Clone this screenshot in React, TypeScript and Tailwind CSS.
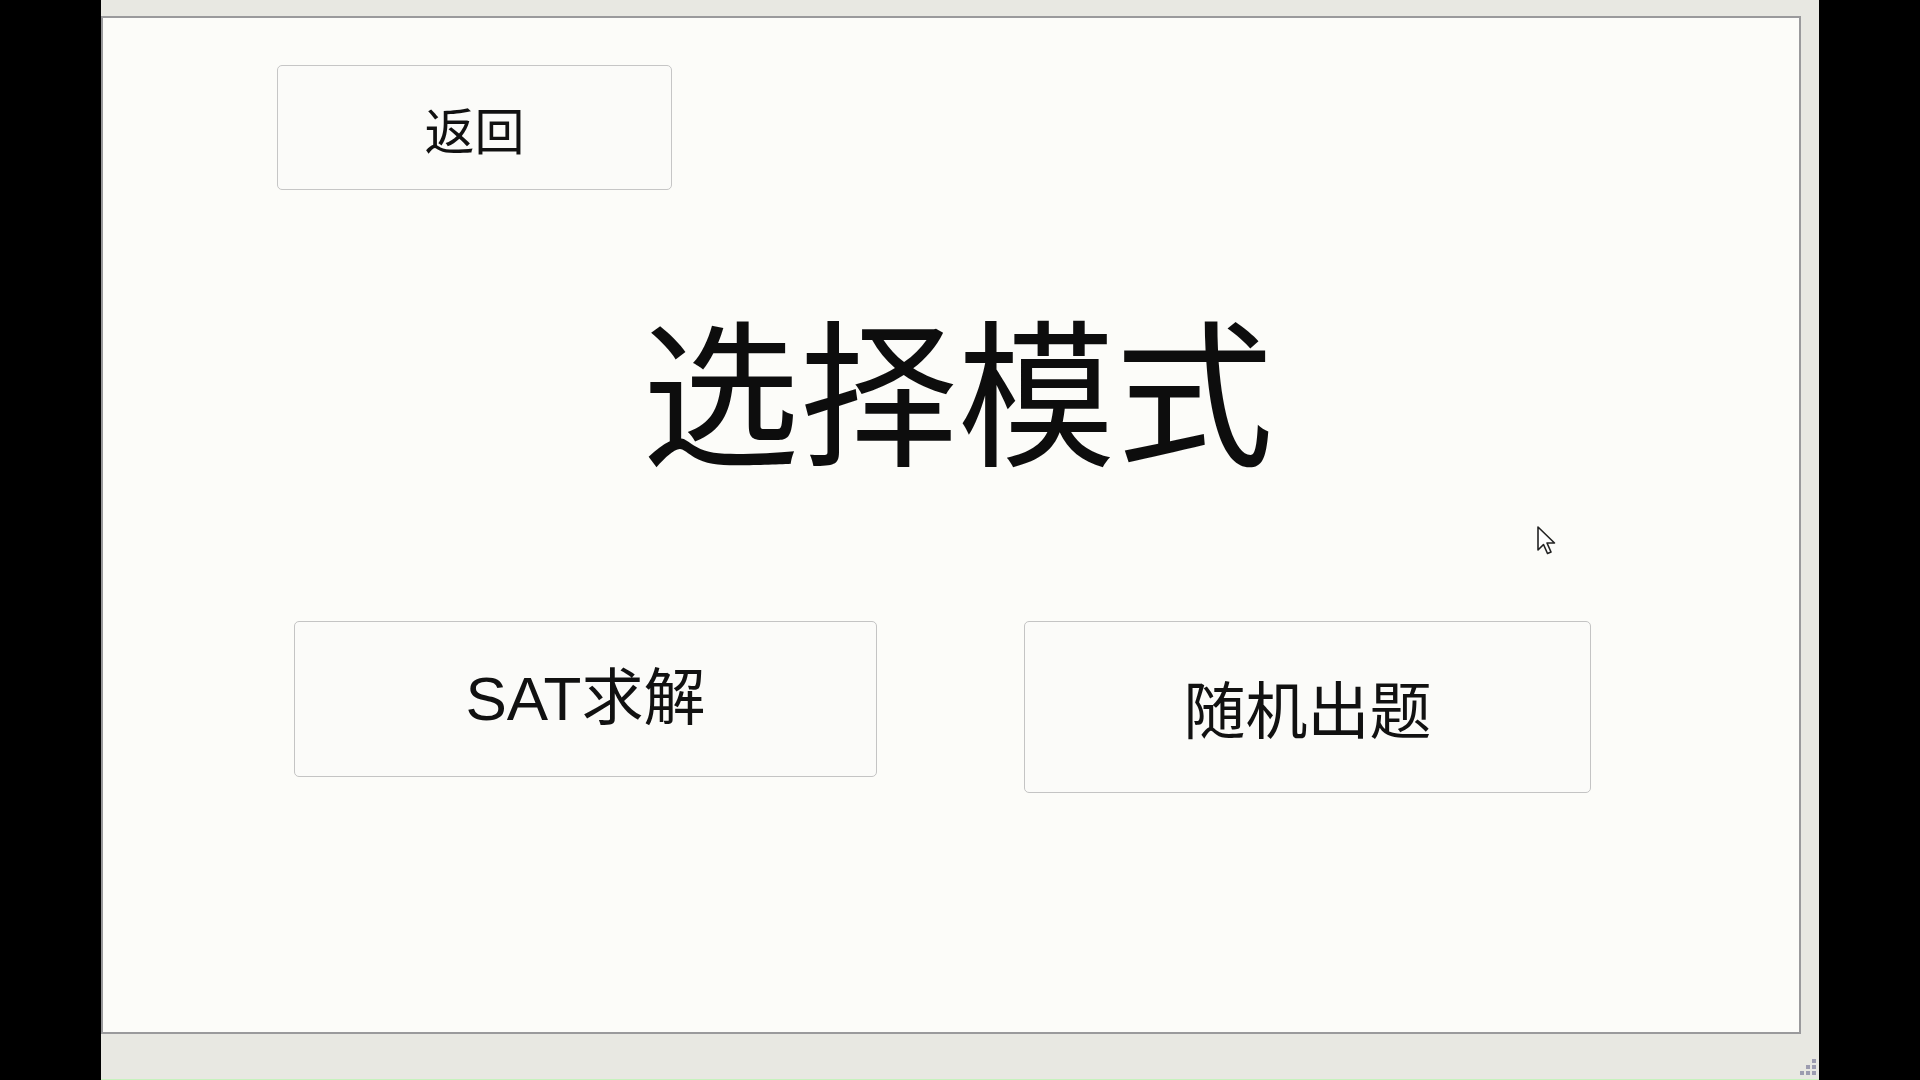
export default function App() {
  const cjk = "font-['Noto_Sans_CJK_SC',sans-serif]";
  return (
    <div className="flex h-[1080px] w-[1920px] overflow-hidden bg-black">
      <div className="w-[101px] shrink-0" />
      <div className="relative flex h-full w-[1718px] shrink-0 flex-col bg-[#e8e8e2] pt-[16px]">
        <div className="relative flex h-[1018px] w-[1700px] flex-col border-2 border-[#9a9a9c] bg-[#fcfcf9]">
          <button
            type="button"
            className={`ml-[174px] mt-[47px] flex h-[125px] w-[395px] items-center justify-center rounded-[5px] border border-[#c6c6c6] bg-[#fbfbf9] text-[50px] leading-none text-[#111] ${cjk}`}
          >
            返回
          </button>

          <div className="mt-[117px] flex justify-center pl-[13px]">
            <h1 className={`text-[158px] font-normal leading-none text-[#0d0d0d] ${cjk}`}>选择模式</h1>
          </div>

          <div className="mt-[156px] flex items-start gap-[147px] pl-[191px]">
            <button
              type="button"
              className="flex h-[156px] w-[583px] items-center justify-center rounded-[5px] border border-[#c4c4c4] bg-[#fbfbf9] font-['Liberation_Sans','Noto_Sans_CJK_SC',sans-serif] text-[62px] leading-none text-[#111]"
            >
              SAT求解
            </button>
            <button
              type="button"
              className={`flex h-[172px] w-[567px] items-center justify-center rounded-[5px] border border-[#c4c4c4] bg-[#fbfbf9] text-[62px] leading-none text-[#111] ${cjk}`}
            >
              随机出题
            </button>
          </div>

          {/* mouse pointer */}
          <svg
            className="absolute left-[1433px] top-[507px]"
            width="22"
            height="32"
            viewBox="0 0 22 32"
          >
            <path
              d="M2 2 L2 25 L7.5 19.5 L11.5 28.5 L15 27 L11 18 L18.5 18 Z"
              fill="#fff"
              stroke="#222"
              strokeWidth="1.6"
              strokeLinejoin="round"
            />
          </svg>
        </div>

        <div className="flex-1" />
        <div className="h-px w-full bg-[#c6f2bd]" />

        {/* resize grip */}
        <svg className="absolute bottom-[3px] right-[1px]" width="18" height="18" viewBox="0 0 18 18">
          <rect x="12" y="0" width="4" height="4" fill="#9c9cb0" />
          <rect x="6" y="6" width="4" height="4" fill="#9c9cb0" />
          <rect x="12" y="6" width="4" height="4" fill="#9c9cb0" />
          <rect x="0" y="12" width="4" height="4" fill="#9c9cb0" />
          <rect x="6" y="12" width="4" height="4" fill="#9c9cb0" />
          <rect x="12" y="12" width="4" height="4" fill="#9c9cb0" />
        </svg>
      </div>
    </div>
  );
}
